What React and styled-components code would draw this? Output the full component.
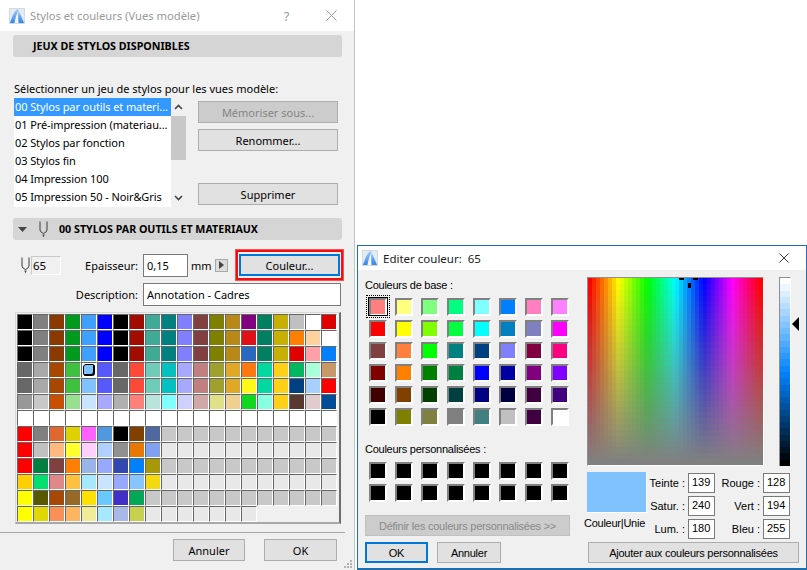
import React from "react";
import styled, { createGlobalStyle } from "styled-components";

const GlobalStyle = createGlobalStyle`
  html, body { margin: 0; padding: 0; background: #fff; }
  body { width: 807px; height: 570px; overflow: hidden; font-family: "Noto Sans", sans-serif; }
`;

const B = "#000000", W = "#ffffff", G1 = "#c8c8c8", G2 = "#e8e8e8";

const PEN_ROWS = [
  [B, "#808080", "#8a3a00", "#009a20", "#40a0ff", "#0000ff", B, "#a00c00", "#40aa96", "#008080", "#8080ff", "#804040", "#808000", "#b88818", "#800080", "#008060", "#c8b000", "#c0c0c0", W, "#e00000"],
  [B, "#808080", "#8a3a00", "#009a20", "#40a0ff", "#0000ff", B, "#a00c00", "#40aa96", "#008080", "#8080ff", "#804040", "#808000", "#b88818", "#e01018", "#008060", "#c8b000", "#ff8000", "#ffd0a0", W],
  [B, "#808080", "#8a3a00", "#009a20", "#40a0ff", "#0000ff", B, "#a00c00", "#40aa96", "#008080", "#8080ff", "#804040", "#808000", "#b88818", "#2868c0", "#008060", "#c8b000", "#e00000", "#ffa0a8", "#0080ff"],
  ["#686868", "#a8a8a8", "#a84800", "#40c040", "#80c2ff", "#5858ff", "#686868", "#ff4838", "#70ccb8", "#00c0c0", "#a8a8ff", "#c08080", "#a0a030", "#e0a828", "#ff7810", "#00d8a0", "#ffd018", "#00b860", "#a8ffd8", "#c89868"],
  ["#686868", "#a8a8a8", "#a84800", "#40c040", "#80c2ff", "#5858ff", "#686868", "#ff4838", "#70ccb8", "#00c0c0", "#a8a8ff", "#c08080", "#a0a030", "#e0a828", "#fff818", "#00d8a0", "#ffd018", "#004080", "#a8d0ff", "#ff0000"],
  ["#989898", "#c8c8c8", "#c85000", "#98e090", "#c8e4ff", "#a8a8ff", "#b0b0b0", "#ff8078", "#b8e4dc", "#80ffff", "#d0d0ff", "#d0a8a8", "#e0e088", "#f0d090", "#10d820", "#88ffe0", "#ffd018", "#583830", "#e0cccc", "#004c98"],
  Array(20).fill(W),
  ["#ff0000", "#808080", "#e06830", "#e0d000", "#ff60ff", "#5098e0", B, "#804000", "#5068a0", ...Array(11).fill(G1)],
  ["#ff0000", "#c0c0c0", "#ffb880", "#ffff30", "#ffd0ff", "#b0d0ff", "#909090", "#e87800", "#80a0f0", ...Array(11).fill(G2)],
  ["#ff0000", "#008040", "#804040", "#ff8000", "#98b4e8", "#98a8ff", "#3048b0", "#0080ff", "#a89808", ...Array(11).fill(G1)],
  ["#ffd000", "#00e070", "#e08888", "#ffc040", "#a8e8ff", "#c8e4ff", "#98a8ff", "#88c4ff", "#f4d810", ...Array(11).fill(G2)],
  ["#ffff00", "#585800", "#a84808", "#986828", "#ffe000", "#68c8ff", "#4030c8", "#00a858", ...Array(12).fill(G1)],
  ["#ffff00", "#e0d800", "#f89058", "#ffb460", "#f0ec98", "#a8e8ff", "#a8b8e8", "#c8d050", ...Array(7).fill(G2)],
];

const BASE_COLORS = [
  "#ff8080", "#ffff80", "#80ff80", "#00ff80", "#80ffff", "#0080ff", "#ff80c0", "#ff80ff",
  "#ff0000", "#ffff00", "#80ff00", "#00ff40", "#00ffff", "#0080c0", "#8080c0", "#ff00ff",
  "#804040", "#ff8040", "#00ff00", "#008080", "#004080", "#8080ff", "#800040", "#ff0080",
  "#800000", "#ff8000", "#008000", "#008040", "#0000ff", "#0000a0", "#800080", "#8000ff",
  "#400000", "#804000", "#004000", "#004040", "#000080", "#000040", "#400040", "#400080",
  "#000000", "#808000", "#808040", "#808080", "#408080", "#c0c0c0", "#400040", "#ffffff",
];

const LIST_ITEMS = [
  "00 Stylos par outils et materi...",
  "01 Pré-impression (materiau...",
  "02 Stylos par fonction",
  "03 Stylos fin",
  "04 Impression 100",
  "05 Impression 50 - Noir&Gris",
];

// stepped gradients, the old Windows colour picker is not smooth
const hueSteps = () => {
  const n = 44, out = [];
  for (let i = 0; i < n; i++) {
    const c = `hsl(${(i * 360) / (n - 1)} 100% 50%)`;
    out.push(`${c} ${(i * 100) / n}%`, `${c} ${((i + 1) * 100) / n}%`);
  }
  return out.join(",");
};
const graySteps = () => {
  const n = 32, out = [];
  for (let i = 0; i < n; i++) {
    const c = `rgba(128,128,128,${(i / (n - 1)).toFixed(3)})`;
    out.push(`${c} ${(i * 100) / n}%`, `${c} ${((i + 1) * 100) / n}%`);
  }
  return out.join(",");
};
const lumSteps = () => {
  const n = 30, out = [];
  for (let i = 0; i < n; i++) {
    const l = 100 - (i * 100) / (n - 1);
    const c = `hsl(209 100% ${l.toFixed(1)}%)`;
    out.push(`${c} ${(i * 100) / n}%`, `${c} ${((i + 1) * 100) / n}%`);
  }
  return out.join(",");
};

const Page = styled.div`
  display: flex;
  width: 807px;
  height: 570px;
  overflow: hidden;
`;

const LeftDialog = styled.div`
  width: 355px;
  height: 570px;
  flex: none;
  display: flex;
  flex-direction: column;
  background: #f0f0f0;
  border-right: 1px solid #c4c4c4;
  box-sizing: border-box;
  color: #000;
  font-size: 11px;
`;

const TitleBar = styled.div`
  height: 31px;
  flex: none;
  background: #fff;
  display: flex;
  align-items: center;
  padding-left: 9px;
  font-size: 11.2px;
  color: #999;
`;

const TitleText = styled.span`
  margin-left: 5px;
  flex: 1;
`;

const WinButton = styled.span`
  width: ${p => p.$w || 45}px;
  display: flex;
  justify-content: center;
  font-size: 13px;
  color: #999;
`;

const SectionHead = styled.div`
  height: 22px;
  margin: ${p => p.$top}px 12px 0 13px;
  background: #d5d5d5;
  border-radius: 3px;
  display: flex;
  align-items: center;
  padding-left: ${p => p.$pad}px;
  font-weight: 700;
  font-size: 10.7px;
`;

const ListLabel = styled.div`
  margin: 24px 0 0 14px;
  height: 17px;
  line-height: 16px;
`;

const ListRow = styled.div`
  display: flex;
  margin: 0 0 0 14px;
  height: 109px;
`;

const ListBox = styled.div`
  width: 157px;
  background: #fff;
`;

const ListItem = styled.div`
  height: 18px;
  line-height: 18px;
  padding-left: 1px;
  white-space: nowrap;
  letter-spacing: -0.1px;
  background: ${p => (p.$selected ? "#3399ff" : "transparent")};
  color: ${p => (p.$selected ? "#fff" : "#000")};
`;

const ScrollBar = styled.div`
  width: 15px;
  display: flex;
  flex-direction: column;
  background: #f0f0f0;
`;

const ScrollArrow = styled.div`
  height: 18px;
  display: flex;
  align-items: center;
  justify-content: center;
`;

const ScrollThumb = styled.div`
  height: 44px;
  background: #c8c8c8;
`;

const ScrollTrack = styled.div`
  flex: 1;
`;

const ListButtons = styled.div`
  margin-left: 12px;
  width: 140px;
  padding-top: 3px;
  display: flex;
  flex-direction: column;
`;

const PushButton = styled.div`
  box-sizing: border-box;
  width: ${p => p.$w || 140}px;
  height: 22px;
  margin-top: ${p => p.$top || 0}px;
  flex: none;
  display: flex;
  align-items: center;
  justify-content: center;
  background: ${p => (p.$disabled ? "#cccccc" : "#e1e1e1")};
  border: 1px solid #adadad;
  color: ${p => (p.$disabled ? "#848484" : "#000")};
`;

const PenRow = styled.div`
  display: flex;
  align-items: center;
  margin-top: 9px;
  height: 32px;
  padding-left: 21px;
`;

const PenField = styled.div`
  box-sizing: border-box;
  width: 30px;
  height: 19px;
  margin-left: 1px;
  border: 1px solid #c8c8c8;
  border-bottom-color: #fff;
  border-right-color: #fff;
  line-height: 17px;
  padding-left: 1px;
  font-size: 11.5px;
`;

const FieldLabel = styled.span`
  width: ${p => p.$w}px;
  flex: none;
  text-align: right;
  white-space: nowrap;
`;

const TextField = styled.div`
  box-sizing: border-box;
  height: 23px;
  width: ${p => p.$w}px;
  margin-left: 5px;
  flex: none;
  background: #fff;
  border: 1px solid #7a7a7a;
  padding-left: 3px;
  line-height: 21px;
`;

const Unit = styled.span`
  margin-left: 3px;
  width: 24px;
  flex: none;
`;

const ArrowButton = styled.div`
  box-sizing: border-box;
  width: 13px;
  height: 13px;
  flex: none;
  background: #dcdcdc;
  border: 1px solid #a8a8a8;
  display: flex;
  align-items: center;
  justify-content: center;
`;

const Highlight = styled.div`
  box-sizing: border-box;
  width: 109px;
  height: 32px;
  margin-left: 7px;
  flex: none;
  border: 1px solid #ff5050;
  padding: 3px;
  box-shadow: inset 0 0 0 2px #f01010;
`;

const FocusButton = styled.div`
  box-sizing: border-box;
  margin: 1px 0;
  height: 22px;
  background: #e1e1e1;
  border: 2px solid #0078d7;
  display: flex;
  align-items: center;
  justify-content: center;
`;

const DescRow = styled.div`
  display: flex;
  align-items: center;
  height: 23px;
  margin-top: 2px;
  padding-left: 75px;
`;

const PaletteFrame = styled.div`
  box-sizing: border-box;
  width: 326px;
  height: 212px;
  margin: 6px 0 0 15px;
  flex: none;
  border-top: 1px solid #d8d8d8;
  border-left: 1px solid #d8d8d8;
  border-right: 2px solid #6e6e6e;
  border-bottom: 2px solid #a8a8a8;
  padding: 1px 0 0 1px;
  display: grid;
  grid-template-columns: repeat(20, 16px);
  grid-auto-rows: 16px;
  background: #f0f0f0;
`;

const PenCell = styled.div`
  box-sizing: border-box;
  width: 16px;
  height: 16px;
  background: ${p => p.$color};
  border-top: 1px solid #666;
  border-left: 1px solid #666;
  border-right: 1px solid #fff;
  border-bottom: 1px solid #fff;
  position: relative;
`;

const PenSelected = styled.div`
  position: absolute;
  left: 1px;
  top: 1px;
  width: 11px;
  height: 11px;
  box-sizing: border-box;
  background: #80c2ff;
  border: 1px solid #000;
  border-radius: 3px 1px 3px 1px;
  box-shadow: 1px 1px 0 #000;
`;

const Footer = styled.div`
  margin: 8px 9px 0 0;
  border-top: 1px solid #a8a8a8;
  display: flex;
  padding: 6px 8px 0 173px;
  gap: 19px;
  position: relative;
`;

const Grip = styled.svg`
  position: absolute;
  right: -7px;
  top: 27px;
`;

const RightColumn = styled.div`
  flex: none;
  width: 452px;
  display: flex;
  flex-direction: column;
`;

const RightSpacer = styled.div`
  height: 245px;
  background: #fff;
  flex: none;
`;

const RightDialog = styled.div`
  box-sizing: border-box;
  margin-left: 2px;
  width: 450px;
  height: 325px;
  border: 1px solid #1c6fb0;
  border-width: 1px 1px 2px 1px;
  background: #f0f0f0;
  display: flex;
  flex-direction: column;
  font-family: "Liberation Sans", sans-serif;
  font-size: 11px;
  letter-spacing: -0.25px;
  color: #000;
`;

const RightTitle = styled.div`
  height: 24px;
  flex: none;
  background: #fff;
  display: flex;
  align-items: center;
  padding-left: 4px;
  font-family: "Noto Sans", sans-serif;
  font-size: 11.5px;
  letter-spacing: 0;
`;

const RightTitleText = styled.span`
  flex: 1;
  margin-left: 5px;
  white-space: pre;
  color: #222;
`;

const CloseBox = styled.span`
  width: 27px;
  display: flex;
`;

const RightBody = styled.div`
  display: flex;
  flex: 1;
`;

const BasePane = styled.div`
  width: 229px;
  flex: none;
  padding: 7px 0 0 7px;
  box-sizing: border-box;
  display: flex;
  flex-direction: column;
`;

const PaneLabel = styled.div`
  height: 16px;
  line-height: 16px;
  margin-top: ${p => p.$top || 0}px;
`;

const SwatchGrid = styled.div`
  display: grid;
  grid-template-columns: repeat(8, 26px);
  grid-auto-rows: 22px;
  margin: ${p => p.$top}px 0 0 4px;
`;

const Swatch = styled.div`
  box-sizing: border-box;
  width: 18px;
  height: 18px;
  background: ${p => p.$color};
  border-top: 2px solid #808080;
  border-left: 2px solid #808080;
  border-right: 2px solid #fff;
  border-bottom: 2px solid #fff;
  position: relative;
`;

const SwatchFocus = styled.div`
  position: absolute;
  left: -5px;
  top: -5px;
  width: 22px;
  height: 21px;
  border: 1px dotted #000;
  box-shadow: inset 0 0 0 1px #f0f0f0, inset 0 0 0 2px #000;
`;

const DefineButton = styled.div`
  box-sizing: border-box;
  width: 205px;
  height: 21px;
  margin-top: 9px;
  background: #cccccc;
  border: 1px solid #c0c0c0;
  color: #8a8a8a;
  display: flex;
  align-items: center;
  justify-content: center;
  white-space: nowrap;
`;

const BottomButtons = styled.div`
  display: flex;
  margin-top: 6px;
  gap: 9px;
`;

const SmallButton = styled.div`
  box-sizing: border-box;
  width: ${p => p.$w}px;
  height: 21px;
  background: #e1e1e1;
  border: ${p => (p.$focus ? "2px solid #0078d7" : "1px solid #adadad")};
  display: flex;
  align-items: center;
  justify-content: center;
`;

const PickerPane = styled.div`
  flex: 1;
  padding: 7px 0 0 0;
  display: flex;
  flex-direction: column;
`;

const PickerTop = styled.div`
  display: flex;
  height: 189px;
`;

const Spectrum = styled.div`
  box-sizing: border-box;
  width: 177px;
  height: 189px;
  flex: none;
  border-top: 1px solid #909090;
  border-left: 1px solid #909090;
  border-right: 1px solid #fff;
  border-bottom: 1px solid #fff;
  background-image: linear-gradient(to bottom, ${graySteps()}), linear-gradient(to right, ${hueSteps()});
  position: relative;
`;

const Cross = styled.div`
  position: absolute;
  background: #000;
  left: ${p => p.$x}px;
  top: ${p => p.$y}px;
  width: ${p => p.$w}px;
  height: ${p => p.$h}px;
`;

const LumBar = styled.div`
  box-sizing: border-box;
  width: 12px;
  height: 189px;
  margin-left: 15px;
  flex: none;
  border-top: 1px solid #909090;
  border-left: 1px solid #909090;
  border-right: 1px solid #fff;
  background-image: linear-gradient(to bottom, ${lumSteps()});
`;

const LumPointer = styled.svg`
  margin: 40px 0 0 1px;
  flex: none;
`;

const PickerBottom = styled.div`
  display: flex;
  margin-top: 6px;
`;

const PreviewCol = styled.div`
  width: 60px;
  flex: none;
  display: flex;
  flex-direction: column;
`;

const Preview = styled.div`
  box-sizing: border-box;
  width: 60px;
  height: 41px;
  background: #80c2ff;
  border-right: 1px solid #fff;
  border-bottom: 1px solid #fff;
`;

const PreviewLabel = styled.div`
  margin: 2px 0 0 -3px;
  white-space: nowrap;
  line-height: 16px;
`;

const Values = styled.div`
  display: grid;
  grid-template-columns: 41px 27px 48px 27px;
  row-gap: 2px;
  grid-auto-rows: 21px;
  align-items: center;
  letter-spacing: 0;
`;

const ValueLabel = styled.span`
  text-align: right;
  padding-right: 3px;
  white-space: nowrap;
  justify-self: end;
`;

const ValueBox = styled.div`
  box-sizing: border-box;
  width: 27px;
  height: 20px;
  background: #fff;
  border: 1px solid #7a7a7a;
  line-height: 17px;
  padding-left: 3px;
`;

const AddButton = styled.div`
  box-sizing: border-box;
  width: 211px;
  height: 21px;
  margin-top: 3px;
  margin-left: 1px;
  background: #e1e1e1;
  border: 1px solid #adadad;
  display: flex;
  align-items: center;
  justify-content: center;
`;

const LogoBox = styled.svg`
  flex: none;
`;

// archicad style logo, blue sail on a pale square
const Logo = ({ size, id }) => (
  <LogoBox width={size} height={size} viewBox="0 0 16 16">
    <defs>
      <linearGradient id={id} x1="0" y1="0" x2="0" y2="1">
        <stop offset="0" stopColor="#a8cdf5" />
        <stop offset="1" stopColor="#2f86ee" />
      </linearGradient>
    </defs>
    <rect x="0.5" y="0.5" width="15" height="15" fill="#e4ebf3" stroke="#d2dbe4" />
    <path d="M1 15 C3 9 5 3 8.5 1 C11 5 13 10 15 15 Z" fill={`url(#${id})`} />
    <path d="M5.5 15 C6.5 9 8 5 9.5 3 C9 7 9 11 9.6 15 Z" fill="#f4f8fd" />
  </LogoBox>
);

const PenIcon = ({ color = "#3c3c3c" }) => (
  <svg width="9" height="17" viewBox="0 0 9 17" style={{ flex: "none" }}>
    <path d="M1 0.5 V9 Q1 11 4.5 12.5 Q8 11 8 9 V0.5" fill="none" stroke={color} strokeWidth="1" />
    <path d="M3.4 13.6 H5.6 L4.5 16.5 Z" fill={color} />
  </svg>
);

const CloseIcon = ({ size, color }) => (
  <svg width={size} height={size} viewBox="0 0 11 11">
    <path d="M0.5 0.5 L10.5 10.5 M10.5 0.5 L0.5 10.5" stroke={color} strokeWidth="1" fill="none" />
  </svg>
);

const Caret = styled.svg`
  flex: none;
`;

const HeadPen = styled.span`
  margin: 0 11px 0 11px;
  display: flex;
`;

const App = () => {
  return (
    <Page>
      <GlobalStyle />
      <LeftDialog>
        <TitleBar>
          <Logo size={16} id="sail-a" />
          <TitleText>Stylos et couleurs (Vues modèle)</TitleText>
          <WinButton $w={45}>?</WinButton>
          <WinButton $w={45}><CloseIcon size={11} color="#999" /></WinButton>
        </TitleBar>

        <SectionHead $top={4} $pad={20}>JEUX DE STYLOS DISPONIBLES</SectionHead>
        <ListLabel>Sélectionner un jeu de stylos pour les vues modèle:</ListLabel>
        <ListRow>
          <ListBox>
            {LIST_ITEMS.map((item, i) => (
              <ListItem key={item} $selected={i === 0}>{item}</ListItem>
            ))}
          </ListBox>
          <ScrollBar>
            <ScrollArrow>
              <svg width="9" height="6" viewBox="0 0 9 6"><path d="M1 5 L4.5 1.5 L8 5" fill="none" stroke="#444" strokeWidth="1.6" /></svg>
            </ScrollArrow>
            <ScrollThumb />
            <ScrollTrack />
            <ScrollArrow>
              <svg width="9" height="6" viewBox="0 0 9 6"><path d="M1 1 L4.5 4.5 L8 1" fill="none" stroke="#444" strokeWidth="1.6" /></svg>
            </ScrollArrow>
          </ScrollBar>
          <ListButtons>
            <PushButton $disabled>Mémoriser sous...</PushButton>
            <PushButton $top={6}>Renommer...</PushButton>
            <PushButton $top={32}>Supprimer</PushButton>
          </ListButtons>
        </ListRow>

        <SectionHead $top={11} $pad={5}>
          <Caret width="10" height="5" viewBox="0 0 10 5"><path d="M0 0 H9 L4.5 5 Z" fill="#444" /></Caret>
          <HeadPen><PenIcon /></HeadPen>
          00 STYLOS PAR OUTILS ET MATERIAUX
        </SectionHead>

        <PenRow>
          <PenIcon />
          <PenField>65</PenField>
          <FieldLabel $w={77}>Epaisseur:</FieldLabel>
          <TextField $w={45}>0,15</TextField>
          <Unit>mm</Unit>
          <ArrowButton>
            <svg width="5" height="8" viewBox="0 0 5 8"><path d="M0 0 L5 4 L0 8 Z" fill="#444" /></svg>
          </ArrowButton>
          <Highlight>
            <FocusButton>Couleur...</FocusButton>
          </Highlight>
        </PenRow>

        <DescRow>
          <FieldLabel $w={63}>Description:</FieldLabel>
          <TextField $w={198}>Annotation - Cadres</TextField>
        </DescRow>

        <PaletteFrame>
          {PEN_ROWS.flatMap((row, r) =>
            row.map((c, i) => (
              <PenCell key={`${r}-${i}`} $color={r === 3 && i === 4 ? "#ffffff" : c}>
                {r === 3 && i === 4 && <PenSelected />}
              </PenCell>
            ))
          )}
        </PaletteFrame>

        <Footer>
          <PushButton $w={72}>Annuler</PushButton>
          <PushButton $w={73}>OK</PushButton>
          <Grip width="8" height="8" viewBox="0 0 8 8">
            <path d="M6 0h2v2H6zM3 3h2v2H3zM6 3h2v2H6zM0 6h2v2H0zM3 6h2v2H3zM6 6h2v2H6z" fill="#b4b4b4" />
          </Grip>
        </Footer>
      </LeftDialog>

      <RightColumn>
        <RightSpacer />
        <RightDialog>
          <RightTitle>
            <Logo size={16} id="sail-b" />
            <RightTitleText>Editer couleur:  65</RightTitleText>
            <CloseBox><CloseIcon size={10} color="#222" /></CloseBox>
          </RightTitle>
          <RightBody>
            <BasePane>
              <PaneLabel>Couleurs de base :</PaneLabel>
              <SwatchGrid $top={5}>
                {BASE_COLORS.map((c, i) => (
                  <Swatch key={i} $color={c}>{i === 0 && <SwatchFocus />}</Swatch>
                ))}
              </SwatchGrid>
              <PaneLabel $top={11}>Couleurs personnalisées :</PaneLabel>
              <SwatchGrid $top={5}>
                {Array.from({ length: 16 }, (_, i) => <Swatch key={i} $color="#000" />)}
              </SwatchGrid>
              <DefineButton>Définir les couleurs personnalisées &gt;&gt;</DefineButton>
              <BottomButtons>
                <SmallButton $w={63} $focus>OK</SmallButton>
                <SmallButton $w={64}>Annuler</SmallButton>
              </BottomButtons>
            </BasePane>
            <PickerPane>
              <PickerTop>
                <Spectrum>
                  <Cross $x={91} $y={0} $w={5} $h={2} />
                  <Cross $x={105} $y={0} $w={5} $h={2} />
                  <Cross $x={100} $y={5} $w={3} $h={5} />
                </Spectrum>
                <LumBar />
                <LumPointer width="8" height="14" viewBox="0 0 8 14"><path d="M0 7 L7 0 V14 Z" fill="#000" /></LumPointer>
              </PickerTop>
              <PickerBottom>
                <PreviewCol>
                  <Preview />
                  <PreviewLabel>Couleur|Unie</PreviewLabel>
                </PreviewCol>
                <Values>
                  <ValueLabel>Teinte :</ValueLabel><ValueBox>139</ValueBox>
                  <ValueLabel>Rouge :</ValueLabel><ValueBox>128</ValueBox>
                  <ValueLabel>Satur. :</ValueLabel><ValueBox>240</ValueBox>
                  <ValueLabel>Vert :</ValueLabel><ValueBox>194</ValueBox>
                  <ValueLabel>Lum. :</ValueLabel><ValueBox>180</ValueBox>
                  <ValueLabel>Bleu :</ValueLabel><ValueBox>255</ValueBox>
                </Values>
              </PickerBottom>
              <AddButton>Ajouter aux couleurs personnalisées</AddButton>
            </PickerPane>
          </RightBody>
        </RightDialog>
      </RightColumn>
    </Page>
  );
};

export default App;
